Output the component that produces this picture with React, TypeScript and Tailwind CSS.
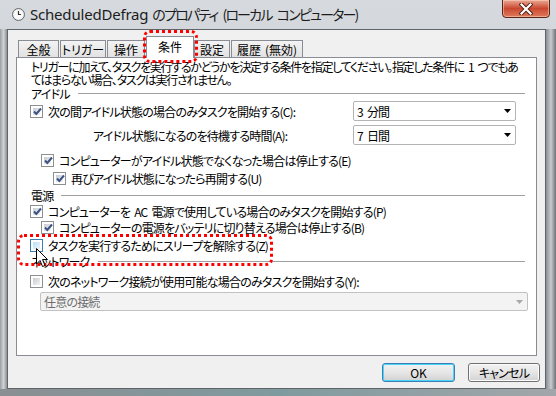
import React from "react";

const F = "font-['Noto_Sans_CJK_JP',sans-serif] [font-feature-settings:'palt']";

function Sp({ w = "w-[4px]" }: { w?: string }) {
  return <span className={`inline-block ${w}`} />;
}

function Check({ checked = false, hover = false }: { checked?: boolean; hover?: boolean }) {
  return (
    <div
      className={`w-[13px] h-[13px] shrink-0 border ${hover ? "border-[#3c7fb1]" : "border-[#8e8f8f]"} bg-white p-[2px]`}
    >
      <div
        className={`relative w-full h-full ${
          hover
            ? "bg-gradient-to-br from-[#b9dff6] to-[#eaf6fd]"
            : "bg-gradient-to-br from-[#c8ccd2] to-[#f4f4f4]"
        }`}
      >
        {checked && (
          <svg className="absolute -left-[1px] -top-[2px]" width="11" height="11" viewBox="0 0 11 11">
            <path d="M2 5.5 L4.3 8 L9 2.5" fill="none" stroke="#3b5484" strokeWidth="2" />
          </svg>
        )}
      </div>
    </div>
  );
}

function CheckRow({
  h,
  pl,
  checked,
  hover,
  children,
}: {
  h: string;
  pl: string;
  checked?: boolean;
  hover?: boolean;
  children: React.ReactNode;
}) {
  return (
    <div className={`flex items-center ${h} ${pl}`}>
      <Check checked={checked} hover={hover} />
      <span className="ml-[5px] whitespace-nowrap">{children}</span>
    </div>
  );
}

function Combo({ children, disabled = false, w }: { children: React.ReactNode; disabled?: boolean; w: string }) {
  return (
    <div
      className={`flex items-center justify-between ${w} h-full rounded-[2px] border ${
        disabled ? "border-[#c2c2c2] bg-[#f3f3f3] text-[#6d6d6d]" : "border-[#b4b4b4] bg-white text-black"
      } pl-[3px] pr-[4px]`}
    >
      <span className="whitespace-nowrap">{children}</span>
      <svg width="7" height="4" viewBox="0 0 7 4">
        <path d="M0 0 H7 L3.5 4 Z" fill={disabled ? "#a8a8a8" : "#000"} />
      </svg>
    </div>
  );
}

function Tab({ label, w, selected = false }: { label: React.ReactNode; w: string; selected?: boolean }) {
  return (
    <div
      className={`${w} flex items-center justify-center border border-b-0 ${
        selected
          ? "h-[22px] -mb-px relative z-10 bg-white border-[#898c95]"
          : "h-[17px] border-[#898c95] bg-gradient-to-b from-[#f3f3f3] to-[#e2e2e2]"
      }`}
    >
      <span className={`whitespace-nowrap ${selected ? "-mt-[3px]" : ""}`}>{label}</span>
    </div>
  );
}

function Header({ label, h }: { label: string; h: string }) {
  return (
    <div className={`flex items-center ${h} pl-[14px] pr-[11px]`}>
      <span className="whitespace-nowrap">{label}</span>
      <div className="flex-1 ml-[8px] h-px bg-[#a0a0a0]" />
    </div>
  );
}

export default function App() {
  return (
    <div
      className={`relative w-[556px] h-[396px] overflow-hidden flex flex-col bg-gradient-to-b from-[#d6dade] via-[#c7ccd1] to-[#b5babf] text-[12px] leading-[13px] tracking-[-0.8px] text-black ${F}`}
    >
      {/* title bar */}
      <div className="h-[29px] flex items-start shrink-0 relative">
        <div className="flex items-center h-[29px] pl-[12px]">
          <svg width="13" height="13" viewBox="0 0 13 13">
            <circle cx="6.5" cy="6.5" r="6" fill="#e8e8e8" stroke="#6b6b6b" />
            <circle cx="6.5" cy="6.5" r="4.5" fill="#fafafa" />
            <path d="M6.5 3 V6.5 H9" fill="none" stroke="#333" strokeWidth="1.2" />
          </svg>
          <span className="ml-[5px] leading-[20px] text-[#1c1c1c] whitespace-nowrap tracking-[-0.2px]">
            <span className="text-[15px] font-['Noto_Sans',sans-serif] [font-feature-settings:normal]">ScheduledDefrag</span>
            <Sp w="w-[4px]" />
            <span className="text-[14px] tracking-[-1.8px]">
              のプロパティ<Sp w="w-[5px]" />(ローカル<Sp w="w-[5px]" />コンピューター)
            </span>
          </span>
        </div>
        <div className="ml-auto mr-[6px] w-[48px] h-[19px] -mt-px rounded-b-[4px] border border-[#5b2418] bg-gradient-to-b from-[#e9a793] via-[#c9472f] to-[#de7a5c] flex items-center justify-center shadow-[inset_0_0_0_1px_rgba(255,220,200,0.5)]">
          <svg width="14" height="12" viewBox="0 0 14 12">
            <path d="M2.5 1.5 L11.5 10.5 M11.5 1.5 L2.5 10.5" stroke="#4a1a10" strokeWidth="4" strokeLinecap="square" />
            <path d="M2.5 1.5 L11.5 10.5 M11.5 1.5 L2.5 10.5" stroke="#ffffff" strokeWidth="2.2" strokeLinecap="square" />
          </svg>
        </div>
      </div>

      {/* body row with side frames */}
      <div className="flex flex-1">
        <div className="w-[7px] bg-gradient-to-r from-[#9a9ea2] via-[#d0d3d6] to-[#8d9194]" />
        <div className="w-[539px] h-[360px] border border-[#5f6468] bg-[#f0f0f0] flex flex-col">
          {/* tabs */}
          <div className="flex items-end h-[27px] pl-[10px] tracking-normal">
            <Tab label="全般" w="w-[41px]" />
            <div className="w-px" />
            <Tab label="トリガー" w="w-[46px]" />
            <div className="w-px" />
            <Tab label="操作" w="w-[38px]" />
            <div className="w-px" />
            <Tab label="条件" w="w-[48px]" selected />
            <Tab label="設定" w="w-[36px]" />
            <div className="w-px" />
            <Tab label={<>履歴<Sp w="w-[4px]" />(無効)</>} w="w-[72px]" />
          </div>
          {/* panel */}
          <div className="ml-[8px] w-[521px] h-[299px] border border-[#898c95] bg-white flex flex-col pt-[2px]">
            <div className="pl-[14px] whitespace-nowrap tracking-[-1.3px]">
              <div className="h-[13px]">
                トリガーに加えて、タスクを実行するかどうかを決定する条件を指定してください。指定した条件に<Sp />1<Sp />つでもあ
              </div>
              <div className="h-[13px]">てはまらない場合、タスクは実行されません。</div>
            </div>
            <Header label="アイドル" h="h-[15px]" />
            <div className="flex items-center h-[20px] pr-[20px]">
              <CheckRow h="h-[20px]" pl="pl-[13px]" checked>
                次の間アイドル状態の場合のみタスクを開始する(C):
              </CheckRow>
              <div className="ml-auto h-[20px]">
                <Combo w="w-[163px]">3<Sp />分間</Combo>
              </div>
            </div>
            <div className="flex items-center h-[20px] mt-[4px] pr-[20px]">
              <span className="pl-[76px] whitespace-nowrap">アイドル状態になるのを待機する時間(A):</span>
              <div className="ml-auto h-[20px]">
                <Combo w="w-[163px]">7<Sp />日間</Combo>
              </div>
            </div>
            <div className="mt-[6px]">
              <CheckRow h="h-[18px]" pl="pl-[24px]" checked>
                コンピューターがアイドル状態でなくなった場合は停止する(E)
              </CheckRow>
            </div>
            <CheckRow h="h-[18px]" pl="pl-[36px]" checked>
              再びアイドル状態になったら再開する(U)
            </CheckRow>
            <Header label="電源" h="h-[17px]" />
            <CheckRow h="h-[15px]" pl="pl-[13px]" checked>
              コンピューターを<Sp />AC<Sp />電源で使用している場合のみタスクを開始する(P)
            </CheckRow>
            <CheckRow h="h-[17px]" pl="pl-[24px]" checked>
              コンピューターの電源をバッテリに切り替える場合は停止する(B)
            </CheckRow>
            <CheckRow h="h-[18px]" pl="pl-[13px]" hover>
              タスクを実行するためにスリープを解除する(Z)
            </CheckRow>
            <Header label="ネットワーク" h="h-[15px]" />
            <div className="mt-[2px]">
              <CheckRow h="h-[20px]" pl="pl-[13px]">
                次のネットワーク接続が使用可能な場合のみタスクを開始する(Y):
              </CheckRow>
            </div>
            <div className="mt-[1px] h-[19px] pl-[23px]">
              <Combo w="w-[488px]" disabled>任意の接続</Combo>
            </div>
          </div>
          {/* buttons */}
          <div className="flex justify-end gap-[13px] mt-[7px] pr-[5px] tracking-normal">
            <div className="w-[73px] h-[19px] rounded-[3px] border border-[#3c7fb1] shadow-[inset_0_0_0_1px_#48d5fb] bg-gradient-to-b from-[#f2f2f2] via-[#e6e6e6] to-[#d2d2d2] flex items-center justify-center">
              OK
            </div>
            <div className="w-[72px] h-[19px] rounded-[3px] border border-[#707070] shadow-[inset_0_0_0_1px_#fcfcfc] bg-gradient-to-b from-[#f2f2f2] via-[#e6e6e6] to-[#d2d2d2] flex items-center justify-center tracking-[-0.8px]">
              キャンセル
            </div>
          </div>
        </div>
        <div className="w-[10px] bg-gradient-to-r from-[#8b9094] via-[#c8ccd0] to-[#6e7377]" />
      </div>
      <div className="h-[7px] bg-gradient-to-r from-[#8a8f93] via-[#7f9a9e] to-[#a2a6aa]" />

      {/* annotations */}
      <div className="absolute left-[143px] top-[30px] w-[55px] h-[33px] rounded-[7px] border-[3px] border-dotted border-[#ff0000]" />
      <div className="absolute left-[17px] top-[234px] w-[256px] h-[32px] rounded-[7px] border-[3px] border-dotted border-[#ff0000]" />

      {/* cursor */}
      <svg className="absolute left-[36px] top-[248px]" width="13" height="20" viewBox="0 0 13 20">
        <path d="M0.5 0.5 V16 L4 12.5 L6.5 18.5 L9 17.5 L6.5 11.5 H11.5 Z" fill="#fff" stroke="#000" strokeWidth="1" />
      </svg>
    </div>
  );
}
